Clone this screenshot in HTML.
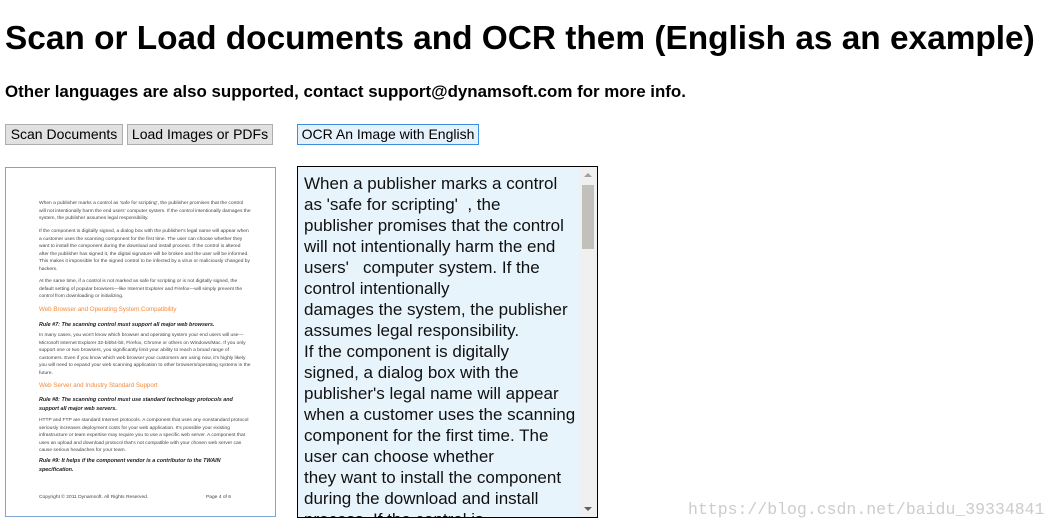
<!DOCTYPE html>
<html><head><style>
body{margin:0;width:1058px;height:531px;overflow:hidden;background:#fff;font-family:"Liberation Sans",sans-serif;position:relative}
.a{position:absolute;white-space:nowrap}
h1{position:absolute;left:5px;top:20px;margin:0;font-size:33.4px;font-weight:bold;white-space:nowrap}
.sub{left:5px;top:82px;font-size:16.9px;font-weight:bold}
.btn{position:absolute;top:124px;height:19px;border:1px solid #adadad;background:#e1e1e1;font-size:14px;line-height:19px;text-align:center;color:#000}
.img{position:absolute;left:5px;top:167px;width:269px;height:348px;border:1px solid #7ea6d0;background:#fff}
.img p{position:absolute;left:33px;margin:0;font-size:4.9px;line-height:7.5px;color:#444;width:212px;white-space:normal}
.img .o{color:#f58a3c;font-size:6.2px}
.img .r{font-weight:bold;font-style:italic;color:#222;font-size:5.4px;line-height:9px}
.ta{position:absolute;left:297px;top:166px;width:299px;height:350px;border:1px solid #000;background:#e8f4fc;overflow:hidden}
.ta .t{position:absolute;left:6px;top:6px;width:272px;font-size:17px;line-height:21px;color:#111}
.sb{position:absolute;left:281px;top:0;width:18px;height:350px;background:#f0f0f0}
.th{position:absolute;left:3px;top:18px;width:12px;height:64px;background:#c1c0ba}
.wm{left:688px;top:500px;font-family:"Liberation Mono",monospace;font-size:16.5px;color:#ccc}
</style></head><body>
<h1>Scan or Load documents and OCR them (English as an example)</h1>
<div class="a sub">Other languages are also supported, contact support@dynamsoft.com for more info.</div>
<div class="btn" style="left:5px;width:116px">Scan Documents</div>
<div class="btn" style="left:127px;width:144px">Load Images or PDFs</div>
<div class="btn" style="left:297px;width:180px;border-color:#3c8fe0;background:#e5f1fb">OCR An Image with English</div>
<div class="img">
<p style="top:32px">When a publisher marks a control as 'safe for scripting', the publisher promises that the control will not intentionally harm the end users' computer system. If the control intentionally damages the system, the publisher assumes legal responsibility.</p>
<p style="top:60px">If the component is digitally signed, a dialog box with the publisher's legal name will appear when a customer uses the scanning component for the first time. The user can choose whether they want to install the component during the download and install process. If the control is altered after the publisher has signed it, the digital signature will be broken and the user will be informed. This makes it impossible for the signed control to be infected by a virus or maliciously changed by hackers.</p>
<p style="top:110px">At the same time, if a control is not marked as safe for scripting or is not digitally signed, the default setting of popular browsers—like Internet Explorer and Firefox—will simply prevent the control from downloading or initializing.</p>
<p class="o" style="top:138px">Web Browser and Operating System Compatibility</p>
<p class="r" style="top:153px">Rule #7: The scanning control must support all major web browsers.</p>
<p style="top:164px">In many cases, you won't know which browser and operating system your end users will use—Microsoft Internet Explorer 32-bit/64-bit, Firefox, Chrome or others on Windows/Mac. If you only support one or two browsers, you significantly limit your ability to reach a broad range of customers. Even if you know which web browser your customers are using now, it's highly likely you will need to expand your web scanning application to other browsers/operating systems in the future.</p>
<p class="o" style="top:214px">Web Server and Industry Standard Support</p>
<p class="r" style="top:228px">Rule #8: The scanning control must use standard technology protocols and support all major web servers.</p>
<p style="top:249px">HTTP and FTP are standard Internet protocols. A component that uses any nonstandard protocol seriously increases deployment costs for your web application. It's possible your existing infrastructure or team expertise may require you to use a specific web server. A component that uses an upload and download protocol that's not compatible with your chosen web server can cause serious headaches for your team.</p>
<p class="r" style="top:289px">Rule #9: It helps if the component vendor is a contributor to the TWAIN specification.</p>
<p style="top:326px;width:192px">Copyright © 2011 Dynamsoft. All Rights Reserved.<span style="float:right">Page 4 of 6</span></p>
</div>
<div class="ta"><div class="t">When a publisher marks a control<br>as 'safe for scripting'&nbsp; , the<br>publisher promises that the control<br>will not intentionally harm the end<br>users'&nbsp;&nbsp; computer system. If the<br>control intentionally<br>damages the system, the publisher<br>assumes legal responsibility.<br>If the component is digitally<br>signed, a dialog box with the<br>publisher's legal name will appear<br>when a customer uses the scanning<br>component for the first time. The<br>user can choose whether<br>they want to install the component<br>during the download and install<br>process. If the control is</div>
<div class="sb"><div class="th"></div><div style="position:absolute;left:5px;top:6px;border:4px solid transparent;border-bottom:4px solid #a0a0a0;border-top:0"></div><div style="position:absolute;left:5px;top:340px;border:4px solid transparent;border-top:4px solid #606060;border-bottom:0"></div></div></div>
<div class="a wm">https://blog.csdn.net/baidu_39334841</div>
</body></html>
